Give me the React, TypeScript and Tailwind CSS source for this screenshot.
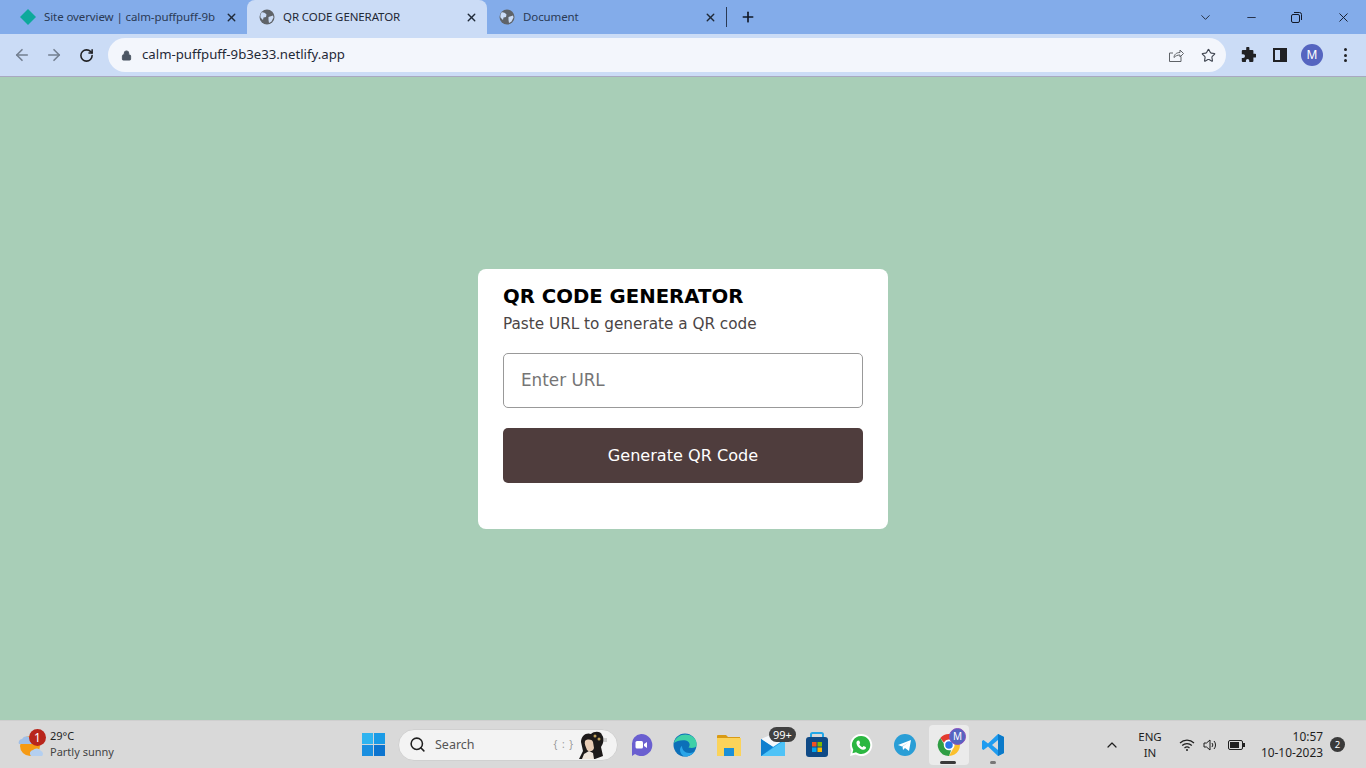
import { useState } from "react";
import { ChevronDown, ChevronUp, Minus, Plus, X, ArrowLeft, ArrowRight, RotateCw, Lock, Star, Search } from "lucide-react";

function Globe() {
  return (
    <svg className="w-[16px] h-[16px] shrink-0" viewBox="0 0 16 16">
      <circle cx="8" cy="8" r="7.5" fill="#5f6368" />
      <path d="M2.500 3.500C4 3 6 4 7.500 5.500L7 8 4.500 8.500 4 11 1.500 8.500A6.500 6.500 0 0 1 2.500 3.500zM9.500 8l4.500-1.500.5 2-2 4-2.500 1.500-.5-3z" fill="#cbdcf6" />
    </svg>
  );
}

function Tab({ title, active, icon, width }: { title: string; active?: boolean; icon: React.ReactNode; width: string }) {
  return (
    <div className={`relative flex items-center h-[34px] shrink-0 rounded-t-[8px] ${width} ${active ? "bg-[#cbdcf6] text-[#1f2937]" : "text-[#2a3a55]"}`}>
      <div className="w-[16px] ml-[12px] mr-[8px] flex justify-center shrink-0">{icon}</div>
      <span className="flex-1 whitespace-nowrap text-[11.5px] tracking-[-0.1px]">{title}</span>
      <X className="w-[13px] h-[13px] ml-[9px] mr-[9px] shrink-0 text-[#1f2937]" strokeWidth={2.5} />
    </div>
  );
}

function ToolbarIcons() {
  return (
    <div className="flex items-center w-[140px] pl-[14px] text-[#1f1f1f]">
      <svg className="w-[16px] h-[16px]" viewBox="0 0 16 16" fill="#202124">
        <path d="M6.2 1.2a1.6 1.6 0 0 1 3.2 0V3h3a1 1 0 0 1 1 1v2.8h1.5a1.8 1.8 0 0 1 0 3.6h-1.5V14a1 1 0 0 1-1 1H9.3v-1.2a1.7 1.7 0 0 0-3.4 0V15H2.8a1 1 0 0 1-1-1v-3h1.3a1.9 1.9 0 0 0 0-3.8H1.8V4a1 1 0 0 1 1-1h3.4z" />
      </svg>
      <div className="w-[14px] h-[14px] ml-[17px] border-2 border-[#202124] flex justify-end">
        <div className="w-[5px] h-full bg-[#202124]" />
      </div>
      <div className="w-[22px] h-[22px] ml-[14px] rounded-full bg-[#5565c0] text-white text-[12px] flex items-center justify-center">M</div>
      <div className="flex flex-col gap-[2.5px] items-center w-[4px] ml-[20px]">
        <span className="w-[3px] h-[3px] rounded-full bg-[#202124]" />
        <span className="w-[3px] h-[3px] rounded-full bg-[#202124]" />
        <span className="w-[3px] h-[3px] rounded-full bg-[#202124]" />
      </div>
    </div>
  );
}

function BrowserChrome() {
  return (
    <div className="shrink-0 font-['Noto_Sans',sans-serif]">
      <div className="h-[34px] bg-[#83acea] flex items-center">
        <div className="flex items-center pl-[8px]">
          <Tab
            title="Site overview | calm-puffpuff-9b"
            width="w-[239px]"
            icon={
              <svg className="w-[16px] h-[16px]" viewBox="0 0 16 16">
                <path d="M8 0l8 8-8 8-8-8z" fill="#0ea99b" />
              </svg>
            }
          />
          <Tab title="QR CODE GENERATOR" width="w-[240px]" active icon={<Globe />} />
          <Tab title="Document" width="w-[239px]" icon={<Globe />} />
        </div>
        <div className="w-px h-[20px] bg-[#2a3a55]" />
        <Plus className="w-[16px] h-[16px] ml-[13px] text-[#111827]" strokeWidth={2.5} />
        <div className="flex-1" />
        <ChevronDown className="w-[15px] h-[15px] text-[#1f2937] mr-[32px]" strokeWidth={1.5} />
        <Minus className="w-[13px] h-[13px] text-[#111827] mr-[33px]" strokeWidth={1.5} />
        <svg className="w-[11px] h-[11px] mr-[34px]" viewBox="0 0 11 11" fill="none" stroke="#111827">
          <rect x="0.5" y="2.5" width="8" height="8" rx="1.5" />
          <path d="M3 .5h5.5A2 2 0 0 1 10.5 2.5V8" />
        </svg>
        <X className="w-[15px] h-[15px] text-[#111827] mr-[15px]" strokeWidth={1.5} />
      </div>
      <div className="h-[43px] bg-[#cbdcf6] border-b border-[#a8a8c0] flex items-center">
        <div className="flex items-center w-[108px] pl-[13px] gap-[14px]">
          <ArrowLeft className="w-[18px] h-[18px] text-[#737f90]" strokeWidth={2.2} />
          <ArrowRight className="w-[18px] h-[18px] text-[#737f90]" strokeWidth={2.2} />
          <RotateCw className="w-[15px] h-[15px] ml-[2px] text-[#202124]" strokeWidth={2.5} />
        </div>
        <div className="flex-1 h-[34px] bg-[#f3f6fc] rounded-full flex items-center pl-[13px] pr-[10px]">
          <Lock className="w-[11px] h-[11px] text-[#4b5563] fill-[#4b5563]" strokeWidth={2} />
          <span className="ml-[10px] text-[13.2px] text-[#1f2937]">calm-puffpuff-9b3e33.netlify.app</span>
          <div className="flex-1" />
          <svg className="w-[16px] h-[16px] mr-[17px]" viewBox="0 0 16 16" fill="none" stroke="#5f6368" strokeWidth="1">
            <path d="M13 9.5V14.5H1.5V6H5M6 10.5c0-3 2.5-5 6-5V3l3.5 3.5L12 10V8c-2.500 0-4.500 .8-6 2.500z" />
          </svg>
          <Star className="w-[15px] h-[15px] text-[#3f4550]" strokeWidth={1.8} />
        </div>
        <ToolbarIcons />
      </div>
    </div>
  );
}

function QrCard() {
  const [url, setUrl] = useState("");
  return (
    <div className="w-[410px] h-[260px] bg-white rounded-[8px] px-[25px] pt-[13px] font-['DejaVu_Sans',sans-serif]">
      <h1 className="text-[19.7px] leading-[30px] font-bold text-black whitespace-nowrap">QR CODE GENERATOR</h1>
      <p className="text-[15.25px] leading-[24px] text-[#4b4545] whitespace-nowrap">Paste URL to generate a QR code</p>
      <input
        value={url}
        onChange={(e) => setUrl(e.target.value)}
        placeholder="Enter URL"
        className="block w-full h-[55px] mt-[17px] border border-[#999] rounded-[5px] px-[17px] text-[16.8px] outline-none placeholder:text-[#757575]"
      />
      <button className="block w-full h-[55px] mt-[20px] pt-[2px] bg-[#4f3d3d] rounded-[5px] text-white text-[16.1px]">Generate QR Code</button>
    </div>
  );
}

function TaskIcon({ children, active }: { children: React.ReactNode; active?: boolean }) {
  return (
    <div className={`relative w-[40px] h-[40px] mx-[2px] flex items-center justify-center rounded-[4px] ${active ? "bg-[#ebebeb]" : ""}`}>
      {children}
    </div>
  );
}

function Taskbar() {
  return (
    <div className="h-[48px] shrink-0 bg-[#d9d9d9] border-t border-[#cfcfcf] flex items-center font-['Noto_Sans',sans-serif] text-[#1f1f1f]">
      <div className="w-[351px] shrink-0 flex items-center pl-[18px]">
        <div className="relative w-[26px] h-[26px]">
          <svg className="w-[26px] h-[26px]" viewBox="0 0 26 26">
            <circle cx="12" cy="14" r="10" fill="#f59a14" />
            <path d="M1 12a3.500 3.500 0 0 1 3-5 5 5 0 0 1 9 0 3 3 0 0 1 2 5z" fill="#9fbfe8" />
            <path d="M13 24a3.500 3.500 0 0 1 2-6 5 5 0 0 1 8 1 3 3 0 0 1 1 5z" fill="#b4cff0" />
          </svg>
          <span className="absolute -top-[3px] left-[11px] w-[17px] h-[17px] rounded-full bg-[#b8251b] text-white text-[12px] leading-[17px] text-center">1</span>
        </div>
        <div className="ml-[6px] pb-[2px] text-[11px] leading-[16px]">
          <div>29°C</div>
          <div className="text-[#444]">Partly sunny</div>
        </div>
      </div>
      <TaskIcon>
        <svg className="w-[23px] h-[23px]" viewBox="0 0 24 24">
          <rect x="0" y="0" width="11.500" height="11.500" fill="#2fb4f0" />
          <rect x="12.500" y="0" width="11.500" height="11.500" fill="#1a9be6" />
          <rect x="0" y="12.500" width="11.500" height="11.500" fill="#1a8fe0" />
          <rect x="12.500" y="12.500" width="11.500" height="11.500" fill="#0c74cf" />
        </svg>
      </TaskIcon>
      <div className="w-[220px] h-[32px] ml-[3px] mr-[1px] rounded-full bg-[#f3f3f3] border border-[#d0d0d0] flex items-center pl-[10px] pr-[8px]">
        <Search className="w-[17px] h-[17px] text-[#1f1f1f]" strokeWidth={2.2} />
        <span className="ml-[9px] pt-[1px] text-[12.500px] text-[#555]">Search</span>
        <div className="flex-1" />
        <span className="text-[10px] text-[#999] tracking-[1px] mr-[1px]">{"{ : }"}</span>
        <svg className="w-[34px] h-[30px]" viewBox="0 0 34 30">
          <path d="M6 12C6 5 12 2 16 4c3-3 10-3 11 1 3 4 1 9-1 12l2 9-8 3H4l4-8z" fill="#1d1a1a" />
          <path d="M10 11c2-2 7-2 8 1l1 6c-1 4-5 4-7 2-1-3-3-6-2-9z" fill="#e9cdb6" />
          <path d="M9 24l5-3 4 2 1 6H7z" fill="#efe6dc" />
          <circle cx="20" cy="6" r="1.500" fill="#c2a25a" />
          <circle cx="24" cy="9" r="1.500" fill="#c2a25a" />
          <path d="M28 9h4M29 11h3" stroke="#aaa" strokeWidth="1" />
        </svg>
      </div>
      <TaskIcon>
        <svg className="w-[24px] h-[24px]" viewBox="0 0 24 24">
          <path d="M12 1a11 11 0 1 1-6 20l-3 2V12A10 10 0 0 1 12 1z" fill="#6a5fd0" />
          <rect x="6.500" y="8" width="7.500" height="7.500" rx="1.500" fill="#fff" />
          <path d="M15 11l3-2v6l-3-2z" fill="#fff" />
        </svg>
      </TaskIcon>
      <TaskIcon>
        <svg className="w-[24px] h-[24px]" viewBox="0 0 24 24">
          <circle cx="12" cy="12" r="11.500" fill="#0c6fb8" />
          <path d="M1 10C3 2 13-1 20 4c3 2 4 5 3.500 9-1 2-5 2.500-8 1.500 2-2 1.500-6-2.500-7C9 6.500 3 8 1 10z" fill="#3fd0a8" />
          <path d="M9 13c0 4 3 7 7 7s5-1 6.500-3c-2 4-6 6.500-10.500 6.500-2 0-5-3-5-7 0-1 1-3 2-3.500z" fill="#2aa5e8" />
        </svg>
      </TaskIcon>
      <TaskIcon>
        <svg className="w-[24px] h-[24px]" viewBox="0 0 24 24">
          <path d="M0 3a1 1 0 0 1 1-1h8l2 2h12v6H0z" fill="#d99a14" />
          <path d="M0 5h24v18H0z" fill="#fbd35a" />
          <path d="M7 15h10v8H7z" fill="#1b90d8" />
        </svg>
      </TaskIcon>
      <TaskIcon>
        <svg className="w-[26px] h-[24px]" viewBox="0 0 26 24">
          <path d="M1 6h24v17H1z" fill="#1a9be6" />
          <path d="M1 6l12-5 12 5-12 8z" fill="#f4f7fb" />
          <path d="M1 23l24-16v16z" fill="#4fc3f7" />
          <path d="M1 6l12 8L1 23z" fill="#0f7fcf" />
        </svg>
        <span className="absolute top-[2px] left-[16px] h-[15px] px-[4px] rounded-[8px] bg-[#404040] text-white text-[11px] leading-[15px] whitespace-nowrap">99+</span>
      </TaskIcon>
      <TaskIcon>
        <svg className="w-[24px] h-[26px]" viewBox="0 0 24 26">
          <path d="M6 7V2.500A1.500 1.500 0 0 1 7.500 1h9A1.500 1.500 0 0 1 18 2.500V7" fill="none" stroke="#22a7e8" strokeWidth="2" />
          <rect x="1" y="5" width="22" height="20" rx="3" fill="#0f4a86" />
          <rect x="7" y="10" width="4.500" height="4.500" fill="#f25022" />
          <rect x="12.500" y="10" width="4.500" height="4.500" fill="#7fba00" />
          <rect x="7" y="15.500" width="4.500" height="4.500" fill="#00a4ef" />
          <rect x="12.500" y="15.500" width="4.500" height="4.500" fill="#ffb900" />
        </svg>
      </TaskIcon>
      <TaskIcon>
        <svg className="w-[24px] h-[24px]" viewBox="0 0 24 24">
          <path d="M12 1a11 11 0 0 0-9.500 16.500L1 23l5.700-1.500A11 11 0 1 0 12 1z" fill="#fff" />
          <path d="M12 3a9 9 0 0 0-7.700 13.700l-.9 3.500 3.600-.9A9 9 0 1 0 12 3z" fill="#2bb741" />
          <path d="M9 7.500c-1 .4-1.800 1.500-1.500 3 .6 3 3.500 5.700 6.300 6.200 1.600.3 2.800-.6 3.200-1.700l-.2-1-2.300-1-1 1.200c-1.300-.5-2.700-1.800-3.200-3l.9-1.100-.9-2.400z" fill="#fff" />
        </svg>
      </TaskIcon>
      <TaskIcon>
        <svg className="w-[24px] h-[24px]" viewBox="0 0 24 24">
          <circle cx="12" cy="12" r="11" fill="#2a9ed6" />
          <path d="M5 12l13-5-2 11-4-3-2 2-.5-3.500L16 9l-7 4.500z" fill="#fff" />
        </svg>
      </TaskIcon>
      <TaskIcon active>
        <svg className="w-[24px] h-[24px]" viewBox="0 0 24 24">
          <path d="M12 1a11 11 0 0 1 9.500 5.500H12a5.500 5.500 0 0 0-5 3.300L3.300 5A11 11 0 0 1 12 1z" fill="#e33b2e" />
          <path d="M21.500 6.500A11 11 0 0 1 12 23l4.700-8.200a5.500 5.500 0 0 0 0-5.800z" fill="#fbc02d" />
          <path d="M12 23A11 11 0 0 1 3.300 5L8 12.800a5.500 5.500 0 0 0 6 4.500z" fill="#2f9e44" />
          <circle cx="12" cy="12" r="4.500" fill="#2a75e6" stroke="#fff" strokeWidth="1.500" />
        </svg>
        <span className="absolute top-[3px] left-[20px] w-[17px] h-[17px] rounded-full bg-[#5565c0] border border-[#8a4fc0] text-white text-[10px] leading-[15px] text-center">M</span>
        <span className="absolute bottom-[1px] left-[11px] w-[16px] h-[3px] rounded-full bg-[#3a3a3a]" />
      </TaskIcon>
      <TaskIcon>
        <svg className="w-[24px] h-[24px]" viewBox="0 0 24 24">
          <path d="M17 1l6 3v16l-6 3L7 13.500 2.500 17 1 16V8l1.500-1L7 10.500z" fill="#1f9cf0" />
          <path d="M17 7l-6 5 6 5z" fill="#d9d9d9" />
          <path d="M17 1l6 3v16l-6 3z" fill="#0b7ac9" />
        </svg>
        <span className="absolute bottom-[1px] left-[17px] w-[6px] h-[3px] rounded-full bg-[#777]" />
      </TaskIcon>
      <div className="flex-1" />
      <ChevronUp className="w-[16px] h-[16px] text-[#1f1f1f]" strokeWidth={1.8} />
      <div className="w-[24px] ml-[18px] text-[11.500px] leading-[16px] text-center">
        <div>ENG</div>
        <div>IN</div>
      </div>
      <svg className="w-[16px] h-[14px] ml-[17px]" viewBox="0 0 16 14" fill="none" stroke="#1f1f1f" strokeWidth="1.200">
        <path d="M1 5a10 10 0 0 1 14 0M3.200 7.500a7 7 0 0 1 9.600 0M5.500 10a3.800 3.800 0 0 1 5 0" />
        <circle cx="8" cy="12" r="1" fill="#1f1f1f" stroke="none" />
      </svg>
      <svg className="w-[15px] h-[14px] ml-[8px]" viewBox="0 0 15 14" fill="none" stroke="#1f1f1f" strokeWidth="1">
        <path d="M1 5h2.500L7 2v10L3.500 9H1zM9 5a3 3 0 0 1 0 4M11 3a6 6 0 0 1 0 8" />
      </svg>
      <div className="ml-[10px] w-[15px] h-[10px] border border-[#1f1f1f] rounded-[2px] p-[1px] relative">
        <div className="w-[9px] h-full bg-[#1f1f1f]" />
        <span className="absolute -right-[3px] top-[2px] w-[2px] h-[4px] bg-[#1f1f1f]" />
      </div>
      <div className="w-[80px] pb-[2px] text-right text-[11.900px] leading-[16px]">
        <div>10:57</div>
        <div>10-10-2023</div>
      </div>
      <span className="ml-[7px] mr-[21px] w-[15px] h-[15px] rounded-full bg-[#3a3a3a] text-white text-[9.500px] leading-[15px] text-center shrink-0">2</span>
    </div>
  );
}

export default function App() {
  return (
    <div className="w-[1366px] h-[768px] overflow-hidden flex flex-col">
      <BrowserChrome />
      <main className="flex-1 bg-[#a8ceb7] flex items-center justify-center">
        <QrCard />
      </main>
      <Taskbar />
    </div>
  );
}
